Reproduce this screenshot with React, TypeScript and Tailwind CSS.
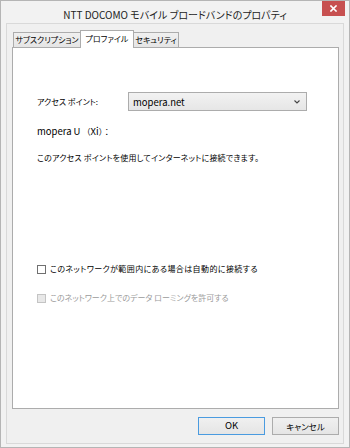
export default function App() {
  return (
    <div className="w-[350px] h-[448px] border border-[#b5b5b5] bg-[#f2f2f2] flex flex-col font-['Noto_Sans_CJK_JP','Noto_Sans',sans-serif] [font-feature-settings:'palt'] text-black">
      <div className="h-[22px] grid grid-cols-[1fr_auto_1fr] items-start">
        <div />
        <div className="mt-[6px] text-[10px] leading-[16px] text-[#222] whitespace-nowrap">
          NTT DOCOMO モバイル ブロードバンドのプロパティ
        </div>
        <div className="flex justify-end pr-[4px]">
          <div className="w-[23px] h-[15px] bg-[#c75050] flex items-center justify-center">
            <svg width="7" height="7" viewBox="0 0 7 7">
              <path d="M1 1 L6 6 M6 1 L1 6" stroke="#fff" strokeWidth="1.6" strokeLinecap="square" />
            </svg>
          </div>
        </div>
      </div>
      <div className="flex-1 mx-[5px] mb-[3px] border border-[#d9d9d9] bg-[#f0f0f0] flex flex-col pl-[5px] pr-[4px] pb-[8px]">
        <div className="mt-[6px] h-[17px] flex items-end pl-[1px] text-[8px] leading-none whitespace-nowrap">
          <div className="w-[68px] h-[15px] border border-b-0 border-[#acacac] bg-gradient-to-b from-[#f0f0f0] to-[#e5e5e5] flex items-center justify-center">
            サブスクリプション
          </div>
          <div className="relative z-10 -ml-[1px] -mb-[1px] w-[54px] h-[18px] border border-b-0 border-[#acacac] bg-white flex items-center justify-center pb-[1px]">
            プロファイル
          </div>
          <div className="-ml-[1px] w-[46px] h-[15px] border border-b-0 border-[#acacac] bg-gradient-to-b from-[#f0f0f0] to-[#e5e5e5] flex items-center justify-center">
            セキュリティ
          </div>
        </div>
        <div className="flex-1 border border-[#acacac] bg-white pl-[24px] pt-[44px] text-[8px] leading-[12px] flex flex-col whitespace-nowrap">
          <div className="flex items-center h-[19px]">
            <div className="w-[91px]">アクセス ポイント:</div>
            <div className="w-[179px] h-[19px] border border-[#acacac] bg-gradient-to-b from-[#f2f2f2] to-[#e6e6e6] flex items-center justify-between pl-[4px] pr-[6px]">
              <span className="text-[9.5px]">mopera.net</span>
              <svg width="6" height="4" viewBox="0 0 6 4">
                <path d="M0.5 0.5 L3 3 L5.5 0.5" stroke="#444" strokeWidth="1.1" fill="none" />
              </svg>
            </div>
          </div>
          <div className="mt-[14px] [font-feature-settings:normal]">
            <span className="text-[9.5px]">mopera U </span>（<span className="text-[9.5px]">Xi</span>）：
          </div>
          <div className="mt-[14px] tracking-[0.2px]">このアクセス ポイントを使用してインターネットに接続できます。</div>
          <div className="mt-[99px] flex items-center h-[12px]">
            <div className="w-[9px] h-[9px] border border-[#707070] bg-white" />
            <div className="ml-[4px] tracking-[0.4px]">このネットワークが範囲内にある場合は自動的に接続する</div>
          </div>
          <div className="mt-[17px] flex items-center h-[12px] text-[#9b9b9b]">
            <div className="w-[9px] h-[9px] border border-[#c4c4c4] bg-[#e8e8e8]" />
            <div className="ml-[4px]">このネットワーク上でのデータ ローミングを許可する</div>
          </div>
        </div>
        <div className="mt-[8px] flex justify-end gap-[7px] text-[8.5px] leading-none">
          <div className="w-[67px] h-[18px] border border-[#4a9be0] bg-gradient-to-b from-[#f0f0f0] to-[#e5e5e5] flex items-center justify-center">
            <span className="text-[9.5px]">OK</span>
          </div>
          <div className="w-[67px] h-[18px] border border-[#acacac] bg-gradient-to-b from-[#f0f0f0] to-[#e5e5e5] flex items-center justify-center">
            キャンセル
          </div>
        </div>
      </div>
    </div>
  );
}
